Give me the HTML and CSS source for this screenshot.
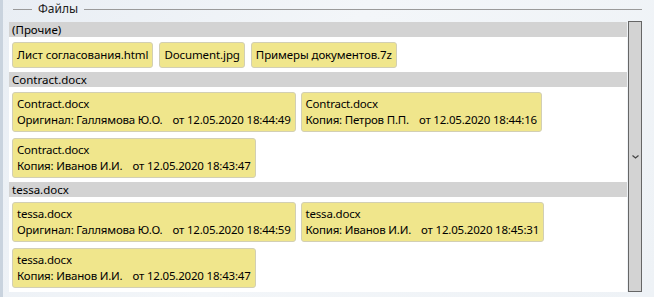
FILE: index.html
```html
<!DOCTYPE html>
<html lang="ru">
<head>
    <meta charset="UTF-8">
    <title>Файлы</title>
    <link rel="stylesheet" href="styles.css">
</head>
<body>
    <div class="frame">
        <div class="legend">
            <span class="legend-line short"></span>
            <span class="legend-text">Файлы</span>
            <span class="legend-line"></span>
        </div>

        <div class="panel">
            <div class="groups">
                <!-- прочие файлы -->
                <div class="group-title">(Прочие)</div>
                <div class="tiles tiles-other">
                    <div class="tile">Лист согласования.html</div>
                    <div class="tile">Document.jpg</div>
                    <div class="tile">Примеры документов.7z</div>
                </div>

                <div class="group-title">Contract.docx</div>
                <div class="tiles">
                    <div class="tile tile-2">
                        <div>Contract.docx</div>
                        <div>Оригинал: Галлямова Ю.О.<span class="date">от 12.05.2020 18:44:49</span></div>
                    </div>
                    <div class="tile tile-2">
                        <div>Contract.docx</div>
                        <div>Копия: Петров П.П.<span class="date">от 12.05.2020 18:44:16</span></div>
                    </div>
                    <div class="tile tile-2">
                        <div>Contract.docx</div>
                        <div>Копия: Иванов И.И.<span class="date">от 12.05.2020 18:43:47</span></div>
                    </div>
                </div>

                <div class="group-title">tessa.docx</div>
                <div class="tiles">
                    <div class="tile tile-2">
                        <div>tessa.docx</div>
                        <div>Оригинал: Галлямова Ю.О.<span class="date">от 12.05.2020 18:44:59</span></div>
                    </div>
                    <div class="tile tile-2">
                        <div>tessa.docx</div>
                        <div>Копия: Иванов И.И.<span class="date">от 12.05.2020 18:45:31</span></div>
                    </div>
                    <div class="tile tile-2">
                        <div>tessa.docx</div>
                        <div>Копия: Иванов И.И.<span class="date">от 12.05.2020 18:43:47</span></div>
                    </div>
                </div>
            </div>

            <div class="scrollbar">
                <svg width="7" height="4" viewBox="0 0 7 4">
                    <path d="M0.5 0.5 L3.5 3 L6.5 0.5" fill="none" stroke="#444" stroke-width="1.2"/>
                </svg>
            </div>
        </div>
    </div>
</body>
</html>
```

FILE: styles.css
```css
html, body {
    margin: 0;
    height: 100%;
}
body {
    font-family: "Noto Sans", "Open Sans", sans-serif;
    font-size: 11.5px;
    color: #000;
    background: linear-gradient(120deg, #e9eef4 0%, #f3f6f9 45%, #eef2f6 100%);
    border-left: 3px solid #c9d3de;
    box-sizing: border-box;
}
.frame {
    padding: 3px 12px 0 6px;
}
.legend {
    display: flex;
    align-items: center;
    height: 12px;
    padding-left: 4px;
}
.legend-line {
    flex: 1;
    height: 1px;
    background: #9a9a9a;
}
.legend-line.short {
    flex: none;
    width: 19px;
}
.legend-text {
    padding: 0 6px;
    line-height: 14px;
    font-size: 12px;
    color: #222;
}
.panel {
    display: flex;
    margin-top: 7px;
    height: 270px;
}
.groups {
    flex: 1;
    background: #fff;
}
.group-title {
    background: #d3d3d3;
    height: 15px;
    line-height: 15px;
    padding-left: 3px;
}
.tiles {
    display: flex;
    flex-wrap: wrap;
    gap: 6px 5px;
    padding: 5px 3px 4px 3px;
}
.tiles-other {
    gap: 6px;
}
.tile {
    background: #f0e68c;
    border: 1px solid #d2cfb4;
    border-radius: 3px;
    padding: 4px;
    line-height: 16px;
    letter-spacing: -0.1px;
    white-space: nowrap;
}
.tile-2 {
    padding: 3px 4px;
    letter-spacing: -0.2px;
}
.date {
    margin-left: 10px;
}
.scrollbar {
    width: 12px;
    margin-top: -1px;
    margin-left: 1px;
    background: #d3d3d3;
    border: 1px solid #666;
    display: flex;
    align-items: center;
    justify-content: center;
}
```
